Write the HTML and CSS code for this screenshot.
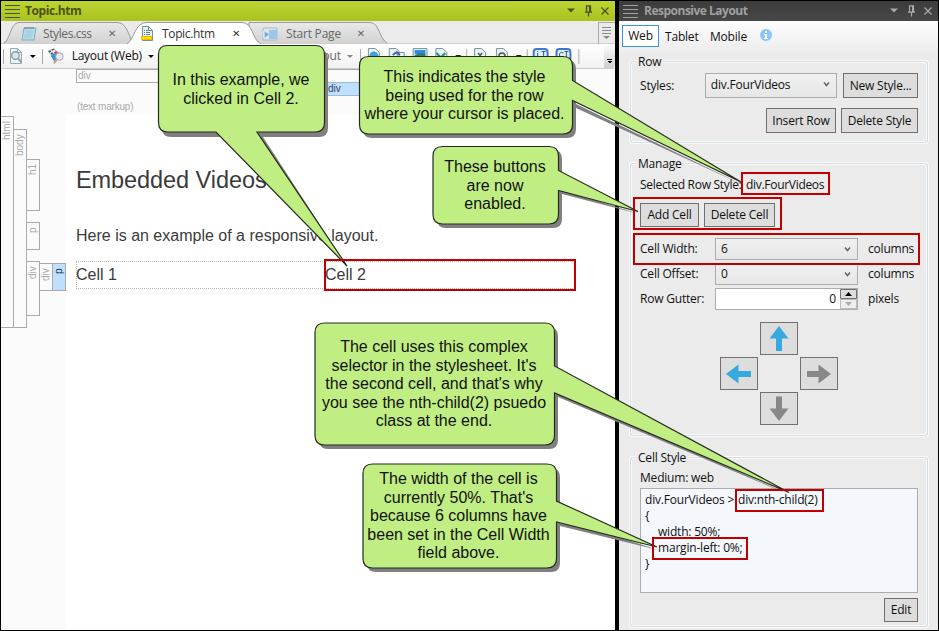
FILE: index.html
```html
<!DOCTYPE html>
<html lang="en">
<head>
<meta charset="utf-8">
<title>Topic.htm</title>
<link rel="stylesheet" href="styles.css">
</head>
<body>
<div class="window">
  <section class="editor">
    <header class="titlebar green">
      <i class="grip"></i><b class="title-topic">Topic.htm</b>
      <svg class="winctl" width="54" height="20" viewBox="0 0 54 20" fill="none" stroke="#4b5314" stroke-width="1.3"><path d="M6 7.5h8l-4 4z" fill="#4b5314" stroke="none"/><path d="M25.500 5v6.500M29.500 5v6.500M25 4.800h5M24 11.200h7M27.500 11.500v4M28.600 5v6"/><path d="M40.500 6.500l7 7M47.500 6.500l-7 7"/></svg>
    </header>
    <nav class="tabs">
      <svg class="tabshape" width="614" height="23" viewBox="0 0 614 23">
        <defs><linearGradient id="tg" x1="0" y1="0" x2="0" y2="1"><stop offset="0" stop-color="#e9e9e9"/><stop offset="1" stop-color="#d2d2d2"/></linearGradient></defs>
        <path d="M2 22.500C9 21 9 1.500 18 1.500H116C125 1.500 127 12 132 22.500Z" fill="url(#tg)" stroke="#999"/>
        <path d="M248 1.500H369C379 1.500 378 19 387 22.500H258L248 11Z" fill="url(#tg)" stroke="#999"/>
        <path d="M0 22.500H614" stroke="#d0d0d0"/>
        <path d="M126 23C133 19 134 1.500 145 1.500H241C252 1.500 251 19 260 23Z" fill="#fff"/>
        <path d="M126 23C133 19 134 1.500 145 1.500H241C252 1.500 251 19 260 23" fill="none" stroke="#999"/>
        <path d="M597.500 23V1.500H614" fill="none" stroke="#aaa"/>
        <path d="M601 6.500h9M601 9.500h9M601 12.500h9" stroke="#888"/><path d="M602 15h7l-3.500 3z" fill="#888"/>
      </svg>
      <div class="tab tab-a"><svg width="16" height="16" viewBox="0 0 16 16"><path d="M3 2h12l-2 12H1z" fill="#b5dce9" stroke="#82aebe"/><path d="M4 5h8M4 7h8M3 9h8M3 11h8" stroke="#9bc9d8"/><path d="M4 1v2M6 1v2M8 1v2M10 1v2M12 1v2" stroke="#778"/></svg><span>Styles.css</span><em>✕</em></div>
      <div class="tab tab-b"><svg width="14" height="16" viewBox="0 0 14 16"><path d="M2.500.500h6l4 4v10h-10z" fill="#e6f1f3" stroke="#71949d"/><path d="M8.500.500v4h4M4 4.500h1M6 4.500h2M4 6.500h1M6 6.500h4M4 8.500h1M6 8.500h4" fill="none" stroke="#6b858d"/><path d="M1.500 10.500h10v3h-10z" fill="#ffe000" stroke="#f3b300"/></svg><span>Topic.htm</span><em>✕</em></div>
      <div class="tab tab-c"><svg width="16" height="14" viewBox="0 0 16 14"><path d="M1 1h14v12H1z" fill="#d9e5ef" stroke="#acbac5"/><path d="M7 3h8v9H7z" fill="#9cc6e9"/><path d="M2 4l5 3.500L2 11z" fill="#75a9d7"/><path d="M2 4v7" stroke="#fff"/></svg><span>Start Page</span><em>✕</em></div>
    </nav>
    <div class="toolbar">
      <i class="sep"></i>
      <svg class="ic1" width="29" height="18" viewBox="0 0 29 18"><path d="M2.500 1.500h7l4 4v11h-11z" fill="#f1f8f8" stroke="#8ea5aa"/><path d="M9.500 1.500v4h4" fill="none" stroke="#8ea5aa"/><circle cx="7.500" cy="8.500" r="3.800" fill="#d8e6f0" stroke="#8d9eaa" stroke-width="1.400"/><path d="M10.500 11.500l3 4" stroke="#8d9eaa" stroke-width="2"/><path d="M22 8h6l-3 3z"/></svg>
      <i class="sep"></i>
      <svg class="ic2" width="18" height="18" viewBox="0 0 18 18"><path d="M1 4l6-2 6 5-6 4z" fill="#eef3f6" stroke="#a9b6bd"/><path d="M2 5l2-1M5 3l2-1M4 7l2-1" stroke="#456" stroke-width="1.500"/><path d="M7 5.500l2-1.500 2 2-2 1.500z" fill="#e33636"/><path d="M4 9l3-3 3 2-2 8z" fill="#3594d2"/><circle cx="12.500" cy="9.500" r="3.800" fill="#e3eaf2" stroke="#a3a0b0"/><path d="M10 12.500l-3 4" stroke="#c9a37e" stroke-width="2"/></svg>
      <span class="layout-label">Layout (Web)</span><i class="down"></i>
      <span class="layout-end">Layout</span><i class="down faded"></i>
      <svg class="icons" width="224" height="25" viewBox="0 0 224 25" fill="none">
        <path d="M.500 5v15M168.500 5v15M220.500 5v15M107.500 5v15" stroke="#aaa"/>
        <g fill="#e7f4f5" stroke="#75949b"><path d="M8.500 4.500h7l4 4v11h-11z"/><path d="M29.500 4.500h7l3 3v12h-10zM37.500 8.500h7v11h-7z"/><path d="M53.500 4.500h14v11h-14z"/><path d="M76.500 4.500h7l4 4v11h-11z"/><path d="M115.500 4.500h7l4 4v11h-11z"/><path d="M137.500 4.500h7l4 4v11h-11z"/></g>
        <path d="M55 6h11v4H55z" fill="#3388df"/><path d="M55 11q6-3 11-1v4H55z" fill="#2c7d6b"/><circle cx="14" cy="12" r="4.500" fill="#459ddd"/><path d="M33 11l4-3 3 3" stroke="#4365b2" stroke-width="2"/><path d="M77 9l4 4M86 9l-4 4" stroke="#27898b" stroke-width="2"/><path d="M119 9l4 5M123 9l-4 5M140 12a3 3 0 0 1 6 0" stroke="#555" stroke-width="1.500"/><path d="M96 11h6l-3 3zM157 11h6l-3 3z" fill="#222"/>
        <g fill="#e2edfc" stroke="#3978ca" stroke-width="2"><rect x="175" y="5" width="14" height="12" rx="3"/><rect x="198" y="5" width="14" height="12" rx="3"/></g><path d="M179 9v5M179 7v1M183 7.500h4M185 7v8M206 7.500h4M208 7v8M205 9q-4-2-4 2t4 2" stroke="#265b9e"/>
      </svg>
      <i class="overflow"></i>
    </div>
    <div class="document">
      <aside class="structure">
        <div class="tag html">html</div>
        <div class="tag body">body</div>
        <div class="blocks"><div class="tag h1">h1</div><div class="tag para">p</div><div class="tag row">div</div></div>
        <div class="cells"><div class="tag">div</div><div class="tag active">p</div></div>
      </aside>
      <main class="page">
        <div class="markers"><div class="outer">div</div><div class="inner">div</div><small>(text markup)</small></div>
        <h1>Embedded Videos</h1>
        <p>Here is an example of a responsive layout.</p>
        <div class="cellrow"><div>Cell 1</div><div class="selected">Cell 2</div></div>
      </main>
    </div>
  </section>
  <section class="panel">
    <header class="titlebar dark">
      <i class="grip"></i><b>Responsive Layout</b>
      <svg class="winctl" width="54" height="20" viewBox="0 0 54 20" fill="none" stroke="#aaa" stroke-width="1.200"><path d="M6 7.500h8l-4 4z" fill="#aaa" stroke="none"/><path d="M25.500 5v6.500M29.500 5v6.500M25 4.800h5M24 11.200h7M27.500 11.500v4M28.600 5v6"/><path d="M40.500 6.500l7 7M47.500 6.500l-7 7"/></svg>
    </header>
    <nav class="media"><span class="current">Web</span><span class="tablet">Tablet</span><span class="mobile">Mobile</span><svg width="12" height="12" viewBox="0 0 12 12"><circle cx="6" cy="6" r="6" fill="#8bc7fb"/><path d="M5 2h2v2H5zM4 5h3v4h1v1H4V9h1V6H4z" fill="#fff"/></svg></nav>
    <div class="group group-row"><span class="legend">Row</span>
      <div class="line"><label>Styles:</label><div class="combo">div.FourVideos<svg width="7" height="5" viewBox="0 0 7 5"><path d="M1 .500l2.500 3L6 .500" fill="none" stroke="#666" stroke-width="1.500"/></svg></div><button class="new">New Style...</button></div>
      <div class="line second"><button class="insert">Insert Row</button><button class="delete">Delete Style</button></div>
    </div>
    <div class="group group-manage"><span class="legend">Manage</span>
      <div class="selectedstyle"><span>Selected Row Style:</span><span class="stylename">div.FourVideos</span></div>
      <div class="cellbuttons"><button>Add Cell</button><button>Delete Cell</button></div>
      <div class="fields">
        <label>Cell Width:</label><div class="combo">6<svg width="7" height="5" viewBox="0 0 7 5"><path d="M1 .500l2.500 3L6 .500" fill="none" stroke="#666" stroke-width="1.500"/></svg></div><span>columns</span>
        <label>Cell Offset:</label><div class="combo">0<svg width="7" height="5" viewBox="0 0 7 5"><path d="M1 .500l2.500 3L6 .500" fill="none" stroke="#666" stroke-width="1.500"/></svg></div><span>columns</span>
        <label>Row Gutter:</label><div class="number"><span>0</span><svg width="17" height="20" viewBox="0 0 17 20"><path d="M.500.500h16v9H.500z" fill="#ddd" stroke="#707070"/><path d="M.500 10.500h16v9H.500z" fill="#eee" stroke="#bbb"/><path d="M5 7h7L8.500 3z"/><path d="M5 13h7l-3.500 4z" fill="#aaa"/></svg></div><span>pixels</span>
      </div>
      <div class="arrows">
        <button class="up"><svg width="26" height="26" viewBox="0 0 26 26"><path d="M13 0L22.500 12.500H16V25H10V12.500H3.500z"/></svg></button>
        <button class="left"><svg width="26" height="26" viewBox="0 0 26 26"><path d="M0 13L12.500 3.500V10H25V16H12.500V22.500z"/></svg></button>
        <button class="right"><svg width="26" height="26" viewBox="0 0 26 26"><path d="M25 13L12.500 3.500V10H1V16H12.500V22.500z"/></svg></button>
        <button class="down-arrow"><svg width="26" height="26" viewBox="0 0 26 26"><path d="M13 25L22.500 12.500H16V.500H10V12.500H3.500z"/></svg></button>
      </div>
    </div>
    <div class="group group-style"><span class="legend">Cell Style</span>
      <div class="medium">Medium: web</div>
      <div class="code"><div><span class="csel">div.FourVideos &gt;</span><span>div:nth-child(2)</span></div><div>{</div><div class="prop">width: 50%;</div><div class="prop">margin-left: 0%;</div><div>}</div></div>
      <div class="editline"><button>Edit</button></div>
    </div>
  </section>
</div>
<svg class="annotations" width="939" height="631" viewBox="0 0 939 631">
  <defs>
    <path id="c1" d="M167.500 45.500H315.500Q324.500 45.500 324.500 54.500V122.500Q324.500 132 315.500 132H257L347 266L216 132H167.500Q158.500 132 158.500 122.500V54.500Q158.500 45.500 167.500 45.500Z"/>
    <path id="c2" d="M368.500 56.500H563Q572.500 56.500 572.500 66V80.500L741 182L572.500 100.500V124.500Q572.500 134 563 134H368.500Q359.500 134 359.500 124.500V66Q359.500 56.500 368.500 56.500Z"/>
    <path id="c3" d="M442.500 146.500H549Q558.500 146.500 558.500 156V170.500L638 211.500L558.500 190.500V214.500Q558.500 224 549 224H442.500Q433 224 433 214.500V156Q433 146.500 442.500 146.500Z"/>
    <path id="c4" d="M324.500 323H545Q554.500 323 554.500 332.500V366L789 492.500L554.500 393V435.500Q554.500 445 545 445H324.500Q315 445 315 435.500V332.500Q315 323 324.500 323Z"/>
    <path id="c5" d="M372.500 464H547Q556.500 464 556.500 473.500V501L657 547L556.500 522V558.500Q556.500 568 547 568H372.500Q363 568 363 558.500V473.500Q363 464 372.500 464Z"/>
  </defs>
  <g fill="#808080"><path d="M171 50H319Q328 50 328 59V128Q328 137 319 137H263L348 268L257 137H171Q162 137 162 128V59Z"/><path d="M372 60H567Q576 60 576 69V104L741 184L576 108V129Q576 138 567 138H372Q363 138 363 129V69Z"/><path d="M446 150H553Q562 150 562 159V190L639 214L562 194V219Q562 228 553 228H446Q437 228 437 219V159Z"/><path d="M328 327H549Q558 327 558 336V390L790 495L558 397V440Q558 449 549 449H328Q319 449 319 440V336Z"/><path d="M376 468H551Q560 468 560 477V518L658 550L560 526V563Q560 572 551 572H376Q367 572 367 563V477Z"/></g>
  <g fill="#c1ee83" stroke="#262b22" stroke-width="1.200"><use href="#c1"/><use href="#c2"/><use href="#c3"/><use href="#c4"/><use href="#c5"/></g>
  <g fill="none" stroke="#c00000" stroke-width="2"><path d="M325 260H575V290H325zM742 173H829V194H742zM634 198H781V229H634zM634 234H919V264H634zM736 490H823V511H736zM653 538H747V559H653z"/></g>
</svg>
<div class="note note-1">In this example, we<br>clicked in Cell 2.</div>
<div class="note note-2">This indicates the style<br>being used for the row<br>where your cursor is placed.</div>
<div class="note note-3">These buttons<br>are now<br>enabled.</div>
<div class="note note-4">The cell uses this complex<br>selector in the stylesheet. It's<br>the second cell, and that's why<br>you see the nth-child(2) psuedo<br>class at the end.</div>
<div class="note note-5">The width of the cell is<br>currently 50%. That's<br>because 6 columns have<br>been set in the Cell Width<br>field above.</div>
</body>
</html>
```
FILE: styles.css
```css
*{box-sizing:border-box}
body{margin:0;width:939px;height:631px;overflow:hidden;position:relative;font:12px/16px "Open Sans",sans-serif;letter-spacing:-.2px;color:#111}
.window{display:flex;width:939px;height:631px;border:1px solid #000;background:#fff}
.editor{width:614px;flex:none;overflow:hidden}
.panel{width:323px;flex:none;border-left:4px solid #000;background:#ebebeb}
.titlebar{height:20px;display:flex;align-items:center;padding-left:4px;font-size:12px}
.titlebar b{margin-left:6px;font-weight:700;letter-spacing:-.5px}
.green{background:linear-gradient(#bcd432,#abc21e);color:#4b5314}
.green .title-topic{margin-left:5px;letter-spacing:-.4px}
.dark{background:linear-gradient(#3c3c3c,#484848);color:#a0a0a0}
.grip{width:15px;height:13px;background:repeating-linear-gradient(currentColor 0 1px,transparent 1px 4px)}
.winctl{margin-left:auto}
.tabs{position:relative;height:23px;display:flex;background:#ebebeb;color:#666}
.tabshape{position:absolute;inset:0}
.tab{position:relative;display:flex;align-items:center;height:25px}
.tab svg{flex:none;margin-right:6px}
.tab span{white-space:nowrap}
.tab em{font:10px "DejaVu Sans",sans-serif;margin-left:auto}
.tab-a{width:95px;margin-left:20px;letter-spacing:-.4px}
.tab-b{width:100px;margin-left:24px;color:#333;letter-spacing:-.35px}
.tab-b svg{margin-right:8px}
.tab-c{width:103px;margin-left:22px}
.tab-c svg{margin-right:8px}
.toolbar{height:25px;display:flex;align-items:center;background:linear-gradient(#fff,#f1f1f1);border-bottom:1px solid #ccc}
.sep{width:1px;height:15px;background:#aaa;margin-left:2px}
.ic1{margin:0 3px 0 4px}
.ic2{margin:0 7px 0 4px}
.layout-label{width:73px;white-space:nowrap;letter-spacing:-.25px}
.down{border:3px solid transparent;border-top-color:#111;border-bottom:0;margin-left:4px}
.layout-end{margin-left:145px;color:#666;width:42px;text-align:right}
.faded{margin-left:6px;border-top-color:#888}
.icons{margin-left:7px}
.overflow{width:11px;height:25px;margin-left:22px;border-radius:0 0 6px;background:linear-gradient(#000,#000) 3px 15px/5px 1px no-repeat,conic-gradient(from -45deg at 50% 100%,#000 90deg,transparent 0) 3px 17px/6px 3px no-repeat,linear-gradient(#fff,#ccc)}
.document{height:560px;display:flex;background:#fff;font-family:"Liberation Sans",sans-serif;letter-spacing:0;color:#3b3b3b}
.structure{width:65px;background:#fbfbfb;display:flex;align-items:flex-start;padding-top:47px;flex:none}
.tag{writing-mode:vertical-rl;transform:rotate(180deg);width:14px;margin-right:-1px;border:1px solid #aaa;font-size:10px;line-height:12px;color:#aaa;text-align:right;padding-bottom:4px;background:#fbfbfb}
.html{height:212px;margin-left:-1px}
.body{height:199px;margin-top:13px}
.blocks{display:flex;flex-direction:column;margin-top:43px;width:13px}
.h1{height:52px}.para{height:28px;margin:11px 0}.row{height:55px}
.cells{display:flex;margin-top:147px}.cells .tag{height:28px}.cells .active{background:#bfdfff;color:#234}
.page{flex:1;padding:0}
.markers{height:45px;background:#fbfbfb;position:relative;padding:32px 0 0 11px;color:#aaa}
.markers small{font-size:10px;line-height:12px;display:block;letter-spacing:-.2px}
.outer,.inner{position:absolute;font-size:10px;line-height:12px;border:1px solid #aaa;padding-left:1px;height:14px}
.outer{left:10px;top:0;width:500px}
.inner{left:257px;top:13px;width:252px;background:#bfdfff;color:#345;border-color:#9bbddd;padding-left:4px}
h1{font-size:23.500px;line-height:28px;font-weight:400;margin:52px 0 0 10px;letter-spacing:-.07px}
p{font-size:16px;line-height:20px;margin:32px 0 0 10px}
.cellrow{display:flex;width:499px;height:28px;margin:15px 0 0 10px;border:1px dotted #bbb;font-size:16px;line-height:26px}
.cellrow div{width:249px;flex:none;text-indent:-1px}
.media{height:34px;display:flex;padding:4px 0 0 3px;background:linear-gradient(#fdfdfd,#ebebeb);line-height:20px}
.current{width:37px;height:22px;border:1px solid #3894f0;text-align:center;background:#fff}
.media .tablet{margin:2px 0 0 6px;width:39px}.media .mobile{margin:2px 0 0 6px;width:43px}.media svg{margin:4px 0 0 7px}
.group{position:relative;border:1px solid #d2dde4;border-radius:3px;box-shadow:0 0 0 1px #fafafa,inset 0 0 0 1px #fafafa;margin-left:11px;width:298px}
.legend{position:absolute;left:4px;top:-8px;background:#ebebeb;padding:0 3px;line-height:15px}
.group-row{height:82px;margin-top:6px;padding:11px 9px 0 9px}
.group-manage{height:273px;margin-top:20px;padding:13px 9px 0}
.group-style{height:170px;margin-top:21px;padding:12px 9px 0}
.line{display:flex;height:25px;align-items:center}
.line label{width:65px}
.combo{height:25px;width:133px;border:1px solid #acacac;background:linear-gradient(#f0f0f0,#e7e7e7);display:flex;align-items:center;justify-content:space-between;padding:0 6px 2px 5px}
button{font:inherit;letter-spacing:inherit;color:inherit;border:1px solid #707070;background:#ddd;height:25px;padding:0;white-space:nowrap}
.new{width:75px;margin-left:6px}
.second{justify-content:flex-end;gap:5px;margin-top:10px}
.insert{width:70px}.delete{width:77px}
.selectedstyle{height:18px;display:flex;letter-spacing:-.3px}
.selectedstyle span{white-space:nowrap}.selectedstyle span:first-child{width:106px}
.cellbuttons{display:flex;gap:5px;margin-top:8px}
.cellbuttons button{width:59px;height:24px}.cellbuttons button+button{width:71px}
.fields{display:grid;grid-template-columns:75px 143px 60px;grid-auto-rows:22px;row-gap:3px;margin-top:11px;align-items:center}
.fields .combo{width:143px;height:22px;padding-bottom:0}.fields>span{padding-left:10px}
.number{height:22px;border:1px solid #acacac;background:#fff;display:flex;justify-content:flex-end;align-items:center;gap:4px}
.arrows{display:grid;grid-template-columns:repeat(3,38px);grid-template-rows:repeat(3,33px);gap:2px;margin:12px 0 0 80px}
.arrows button{height:33px;display:grid;place-items:center;fill:#888}
.up{grid-area:1/2}.left{grid-area:2/1}.right{grid-area:2/3}.down-arrow{grid-area:3/2}
.arrows .up,.arrows .left{fill:#36a9df}
.medium{height:18px}
.code{height:105px;border:1px solid #abadb3;background:#f4f7fc;padding:3px 4px;line-height:16px}
.code>div{white-space:nowrap}.code .csel{display:inline-block;width:93px}.code .prop{padding-left:13px}
.editline{display:flex;justify-content:flex-end;margin-top:5px;padding-right:0}.editline button{width:34px;height:24px}
.annotations{position:absolute;inset:0}
.note{position:absolute;text-align:center;font:16px/18.500px "Liberation Sans",sans-serif;letter-spacing:0;color:#111;white-space:nowrap}
.note-1{left:158px;width:166px;top:71px}
.note-2{left:359px;width:211px;top:68px}
.note-3{left:432px;width:126px;top:158px}
.note-4{left:314px;width:240px;top:338px}
.note-5{left:362px;width:193px;top:470px}
```
